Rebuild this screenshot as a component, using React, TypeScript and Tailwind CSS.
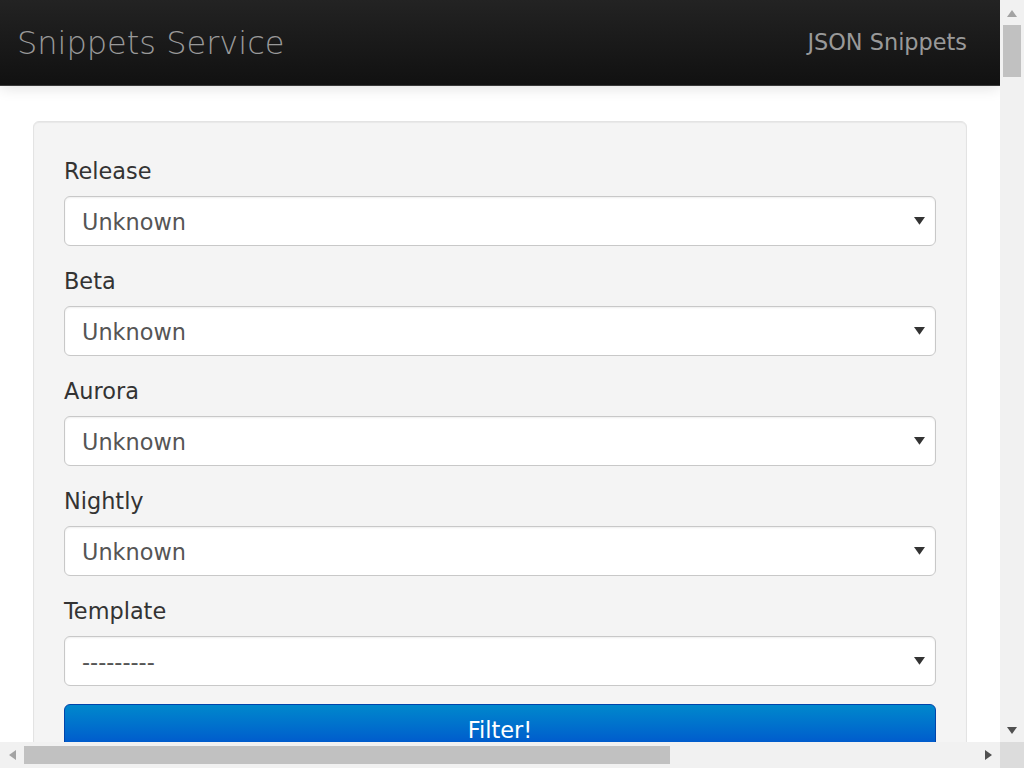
import React from "react";

const groups = [
  { label: "Release", value: "Unknown" },
  { label: "Beta", value: "Unknown" },
  { label: "Aurora", value: "Unknown" },
  { label: "Nightly", value: "Unknown" },
  { label: "Template", value: "---------" },
];

function Tri({ dir, color, size = 10 }: { dir: "up" | "down" | "left" | "right"; color: string; size?: number }) {
  const pts: Record<string, string> = {
    up: "0,7 5,0 10,7",
    down: "0,0 10,0 5,7",
    left: "7,0 7,10 0,5",
    right: "0,0 7,5 0,10",
  };
  const vertical = dir === "up" || dir === "down";
  const s = size / 10;
  return (
    <svg
      width={(vertical ? 10 : 7) * s}
      height={(vertical ? 7 : 10) * s}
      viewBox={vertical ? "0 0 10 7" : "0 0 7 10"}
    >
      <polygon points={pts[dir]} fill={color} />
    </svg>
  );
}

export default function App() {
  return (
    <div
      className="w-[1024px] h-[768px] flex flex-col overflow-hidden bg-white"
      style={{ fontFamily: '"DejaVu Sans", Verdana, sans-serif' }}
    >
      <div className="flex flex-1 min-h-0">
        <div className="w-[1000px] flex flex-col overflow-hidden">
          <header className="h-[86px] shrink-0 flex items-center justify-between bg-gradient-to-b from-[#232323] to-[#111111] border-b border-[#3a3a3a] shadow-[0_2px_14px_rgba(0,0,0,0.12)] pl-[17px] pr-[33px]">
            <span className="text-[32px] font-extralight text-[#999999] leading-none">Snippets Service</span>
            <span className="text-[22.4px] text-[#999999] leading-none">JSON Snippets</span>
          </header>
          <main className="px-[33px] pt-[35px]">
            <div className="bg-[#f4f4f4] border border-[#e3e3e3] rounded-[6px] px-[30px] pt-[33px] pb-[40px] shadow-[inset_0_1px_1px_rgba(0,0,0,0.05)]">
              <div className="flex flex-col">
                {groups.map((g) => (
                  <div key={g.label} className="flex flex-col mb-[19px]">
                    <label className="h-[32px] leading-[32px] text-[22.4px] text-[#333333]">{g.label}</label>
                    <div className="mt-[9px] h-[50px] bg-white border border-[#c8c8c8] rounded-[6px] shadow-[inset_0_1px_2px_rgba(0,0,0,0.07)] flex items-center justify-between pl-[17px] pr-[10px]">
                      <span className="text-[22.4px] text-[#555555] pt-[3px]">{g.value}</span>
                      <Tri dir="down" color="#333333" size={11} />
                    </div>
                  </div>
                ))}
              </div>
              <button className="w-full h-[56px] -mt-[1px] rounded-[6px] bg-gradient-to-b from-[#0088cc] to-[#0044cc] border border-[#0044aa] text-white text-[22.4px] leading-none pb-[4px]">
                Filter!
              </button>
            </div>
          </main>
        </div>
        <div className="w-[24px] bg-[#f1f1f1] flex flex-col items-center">
          <div className="h-[24px] flex items-center justify-center pt-[2px]">
            <Tri dir="up" color="#a3a3a3" />
          </div>
          <div className="w-[18px] h-[52px] bg-[#c1c1c1] mt-[1px]" />
          <div className="flex-1" />
          <div className="h-[24px] flex items-center justify-center">
            <Tri dir="down" color="#505050" />
          </div>
        </div>
      </div>
      <div className="h-[26px] flex bg-[#f1f1f1] shrink-0">
        <div className="w-[24px] flex items-center justify-center">
          <Tri dir="left" color="#a3a3a3" />
        </div>
        <div className="flex-1 flex items-center">
          <div className="w-[646px] h-[18px] bg-[#c1c1c1]" />
        </div>
        <div className="w-[24px] flex items-center justify-center">
          <Tri dir="right" color="#505050" />
        </div>
        <div className="w-[24px] bg-[#dcdcdc]" />
      </div>
    </div>
  );
}
